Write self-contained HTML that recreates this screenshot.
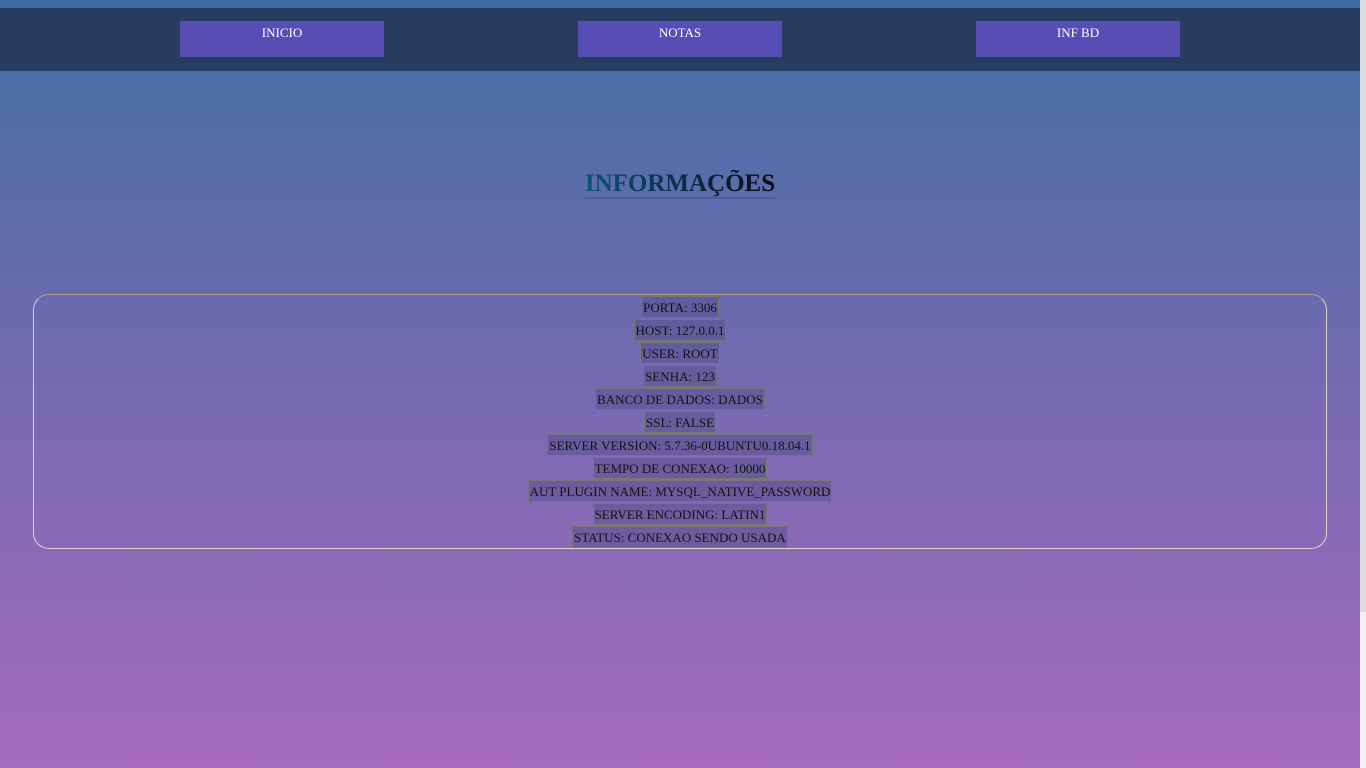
<!DOCTYPE html>
<html><head><meta charset="utf-8"><style>
*{margin:0;padding:0;box-sizing:border-box}
html,body{width:1366px;height:768px;overflow:hidden}
body{font-family:"Liberation Serif",serif;background:linear-gradient(#4a6ea8 0px,#4a6ea8 71px,#6a6aae 300px,#a66bbd 768px);position:relative}
.top{position:absolute;left:0;top:0;width:1360px;height:8px;background:#3e6aa4}
nav{position:absolute;left:0;top:8px;width:1360px;height:63px;background:#263d5f}
nav a{position:absolute;top:13px;width:204px;height:36px;background:#584db4;color:#fff;font-size:13px;text-align:center;line-height:24px;text-decoration:none}
h1{position:absolute;top:170px;left:0;width:1360px;text-align:center;font-size:25px;font-weight:bold}
h1 span{background:linear-gradient(90deg,#0a5478,#0a0a14);-webkit-background-clip:text;background-clip:text;color:transparent;border-bottom:2px solid rgba(80,80,150,.7);line-height:27px;display:inline-block}
.box{position:absolute;left:33px;top:294px;width:1294px;height:255px;border:1px solid #ddd6c8;border-top-color:#a9a38a;border-radius:16px}
.list{position:absolute;left:0;top:296px;width:1360px;text-align:center}
.list div{height:23px}
.list span{display:inline-block;height:22px;line-height:22px;font-size:13px;color:#111;background:rgba(90,80,140,.55);border:1px solid #777;padding:0 1px}
.sb{position:absolute;right:0;top:0;width:6px;height:612px;background:#dcdcdc}
.sb2{position:absolute;right:0;top:612px;width:6px;height:156px;background:#f1f1f1}
</style></head><body>
<div class="top"></div>
<nav><a style="left:180px">INICIO</a><a style="left:578px">NOTAS</a><a style="left:976px">INF BD</a></nav>
<h1><span>INFORMAÇÕES</span></h1>
<div class="box"></div>
<div class="list">
<div><span>PORTA: 3306</span></div>
<div><span>HOST: 127.0.0.1</span></div>
<div><span>USER: ROOT</span></div>
<div><span>SENHA: 123</span></div>
<div><span>BANCO DE DADOS: DADOS</span></div>
<div><span>SSL: FALSE</span></div>
<div><span>SERVER VERSION: 5.7.36-0UBUNTU0.18.04.1</span></div>
<div><span>TEMPO DE CONEXAO: 10000</span></div>
<div><span>AUT PLUGIN NAME: MYSQL_NATIVE_PASSWORD</span></div>
<div><span>SERVER ENCODING: LATIN1</span></div>
<div><span>STATUS: CONEXAO SENDO USADA</span></div>
</div>
<div class="sb"></div><div class="sb2"></div>
</body></html>
